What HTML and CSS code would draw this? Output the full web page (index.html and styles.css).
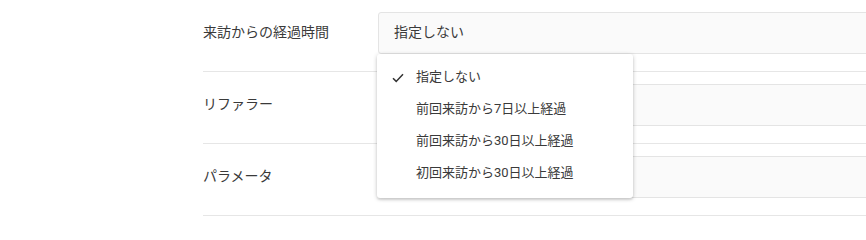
FILE: index.html
```html
<!DOCTYPE html>
<html lang="ja">
<head>
<meta charset="utf-8">
<link rel="stylesheet" href="styles.css">
</head>
<body>
<div class="form">
  <div class="row">
    <div class="label">来訪からの経過時間</div>
    <div class="field">
      <div class="value">指定しない</div>
      <ul class="menu">
        <li class="item selected">
          <svg class="check" width="12" height="10" viewBox="0 0 12 10"><path d="M1 5.2 L4.2 8.4 L11 1.2" fill="none" stroke="#333" stroke-width="1.5"/></svg>
          指定しない
        </li>
        <li class="item">前回来訪から7日以上経過</li>
        <li class="item">前回来訪から30日以上経過</li>
        <li class="item">初回来訪から30日以上経過</li>
      </ul>
    </div>
  </div>
  <div class="row">
    <div class="label">リファラー</div>
    <div class="field"></div>
  </div>
  <div class="row">
    <div class="label">パラメータ</div>
    <div class="field"></div>
  </div>
</div>
</body>
</html>
```
FILE: styles.css
```css
html, body {
  margin: 0;
  padding: 0;
  background: #fff;
  overflow: hidden;
}
body {
  font-family: Roboto, "Noto Sans CJK JP", sans-serif;
  color: #3a3a3a;
}
.form {
  padding-left: 203px;
}
.row {
  display: flex;
  align-items: center;
  padding: 12px 0 17px;
  border-bottom: 1px solid #e6e6e6;
  margin-right: -20px;
}
.label {
  width: 175px;
  flex: none;
  font-size: 14px;
  line-height: 20px;
  margin-top: -2px;
}
.field {
  position: relative;
  flex: 1;
  height: 40px;
  border: 1px solid #e4e4e4;
  border-radius: 3px;
  background: #fafafa;
  box-sizing: content-box;
}
.value {
  padding-left: 15px;
  font-size: 14px;
  line-height: 38px;
}
.menu {
  position: absolute;
  top: 41px;
  left: -2px;
  width: 256px;
  margin: 0;
  padding: 7px 0 9px;
  list-style: none;
  background: #fff;
  border-radius: 3px;
  box-shadow: 0 1px 4px rgba(0, 0, 0, 0.22), 0 2px 2px rgba(0, 0, 0, 0.08);
  z-index: 2;
}
.item {
  position: relative;
  height: 32px;
  line-height: 32px;
  padding-left: 39px;
  font-size: 13px;
  color: #3a3a3a;
}
.check {
  position: absolute;
  left: 15px;
  top: 12px;
}
```
